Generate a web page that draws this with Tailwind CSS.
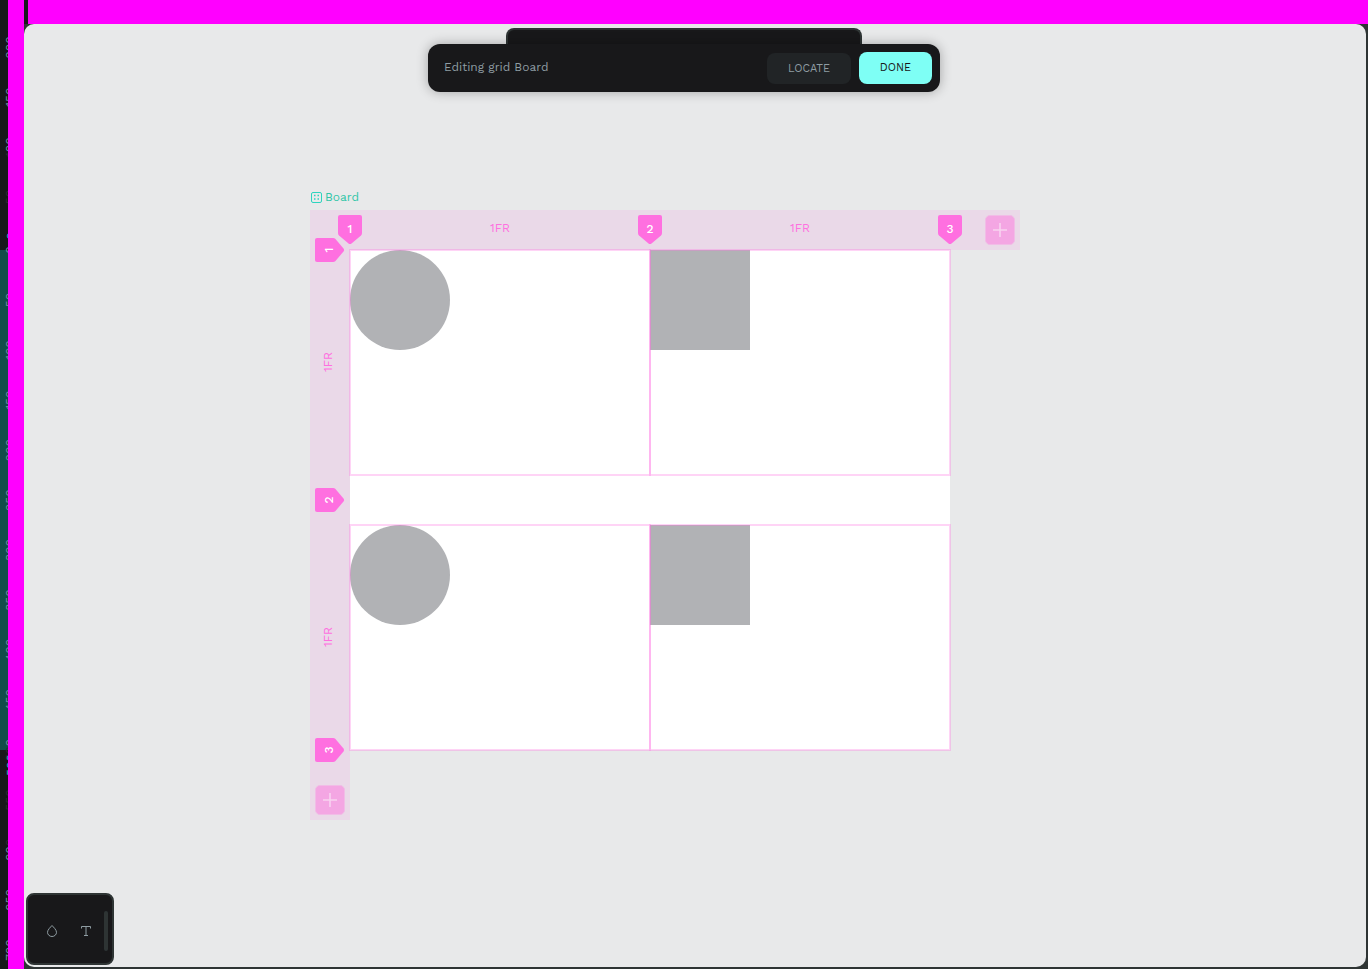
<!DOCTYPE html>
<html lang="en">
<head>
<meta charset="utf-8">
<meta name="viewport" content="width=device-width, initial-scale=1">
<title>Grid editor</title>
<script src="https://cdn.jsdelivr.net/npm/@tailwindcss/browser@4"></script>
</head>
<body class="h-screen overflow-hidden bg-[#18181a] font-['Work_Sans','Inter',sans-serif] text-xs">
<div class="flex h-full">
  <!-- vertical ruler -->
  <aside class="flex w-6 shrink-0" aria-label="Vertical ruler">
    <svg class="h-full w-2 shrink-0 overflow-hidden" aria-hidden="true">
      <rect x="0" y="250" width="8" height="500" fill="#124d49"/>
      <g fill="#7190a5" font-size="12" text-anchor="middle">
        <text transform="translate(14 50) rotate(-90)">-200</text>
        <text transform="translate(14 100) rotate(-90)">-150</text>
        <text transform="translate(14 150) rotate(-90)"><tspan fill="#2c3033">-1</tspan>00</text>
        <text transform="translate(14 200) rotate(-90)" fill="#2c3033">-50</text>
        <text transform="translate(14 250) rotate(-90)">0</text>
        <text transform="translate(14 300) rotate(-90)">50</text>
        <text transform="translate(14 350) rotate(-90)">100</text>
        <text transform="translate(14 400) rotate(-90)">150</text>
        <text transform="translate(14 450) rotate(-90)">200</text>
        <text transform="translate(14 500) rotate(-90)">250</text>
        <text transform="translate(14 550) rotate(-90)">300</text>
        <text transform="translate(14 600) rotate(-90)">350</text>
        <text transform="translate(14 650) rotate(-90)">400</text>
        <text transform="translate(14 700) rotate(-90)">450</text>
        <text transform="translate(14 750) rotate(-90)"><tspan fill="#2c3033">50</tspan>0</text>
        <text transform="translate(14 800) rotate(-90)" fill="#2c3033">550</text>
        <text transform="translate(14 850) rotate(-90)">60<tspan fill="#2c3033">0</tspan></text>
        <text transform="translate(14 900) rotate(-90)">650</text>
        <text transform="translate(14 950) rotate(-90)">700</text>
        <text transform="translate(15 236) rotate(-90)" fill="#31b5d6">0</text>
        <text transform="translate(15 765) rotate(-90)" fill="#31b5d6">500</text>
      </g>
    </svg>
    <div class="flex-1 bg-[#ff00ff]"></div>
  </aside>

  <div class="flex min-w-0 flex-1 flex-col">
    <div class="ml-1 h-6 shrink-0 bg-[#ff00ff]"></div>

    <div class="min-h-0 flex-1 bg-[#2e3434] pr-0.5 pb-0.5">
      <main class="relative h-full overflow-hidden rounded-[10px] bg-[#e8e9ea]">

        <!-- board on the canvas -->
        <section class="absolute top-[164px] left-[286px] w-[710px]" aria-label="Board">
          <h1 class="flex h-[22px] items-start gap-[3px] pl-px leading-4 text-[#31c6a8]">
            <svg class="mt-1 size-[11px]" viewBox="0 0 11 11" fill="none" stroke="#2dd4bf" aria-hidden="true">
              <rect x=".5" y=".5" width="10" height="10" rx="1.5"/>
              <path d="M3 3.500h1.500M6.500 3.500h1.500M3 7h1.500M6.500 7h1.500" stroke-width="1.500"/>
            </svg>
            <span class="pt-px">Board</span>
          </h1>
          <div class="relative grid grid-cols-[40px_600px_70px] grid-rows-[40px_500px_70px]">
            <div class="col-start-1 col-end-4 row-start-1 bg-[#ff6fe0]/12"></div>
            <div class="col-start-1 row-start-2 row-end-4 bg-[#ff6fe0]/12"></div>

            <!-- column sizes -->
            <div class="col-start-2 row-start-1 grid grid-cols-2 items-center pb-1 text-center text-[#ff6fe0]">
              <span>1FR</span><span>1FR</span>
            </div>
            <!-- row sizes -->
            <div class="col-start-1 row-start-2 grid grid-rows-2 gap-[50px] pr-1 text-[#ff6fe0]">
              <span class="flex rotate-180 items-center justify-center [writing-mode:vertical-rl]">1FR</span>
              <span class="flex rotate-180 items-center justify-center [writing-mode:vertical-rl]">1FR</span>
            </div>

            <!-- cells -->
            <div class="relative col-start-2 row-start-2 bg-white">
              <div class="grid h-full grid-cols-2 grid-rows-2 gap-y-[50px]">
                <div class="size-[100px] rounded-full bg-[#b1b2b5]"></div>
                <div class="size-[100px] bg-[#b1b2b5]"></div>
                <div class="size-[100px] rounded-full bg-[#b1b2b5]"></div>
                <div class="size-[100px] bg-[#b1b2b5]"></div>
              </div>
              <div class="absolute inset-0 grid grid-cols-2 grid-rows-2 gap-y-[50px]">
                <div class="-m-px border-2 border-[#ff6fe0]/30"></div>
                <div class="-m-px border-2 border-[#ff6fe0]/30"></div>
                <div class="-m-px border-2 border-[#ff6fe0]/30"></div>
                <div class="-m-px border-2 border-[#ff6fe0]/30"></div>
              </div>
            </div>

            <!-- add track buttons -->
            <button class="relative col-start-3 row-start-1 mr-[5px] flex size-[30px] items-center justify-center self-center justify-self-end rounded-[5px] border border-[#f1bce6] bg-[#f4a6e3]" aria-label="Add column">
              <svg class="size-3.5" viewBox="0 0 14 14" stroke="#f8d3f0" stroke-width="1.600" aria-hidden="true"><path d="M7 0v14M0 7h14"/></svg>
            </button>
            <button class="relative col-start-1 row-start-3 mb-[5px] flex size-[30px] items-center justify-center self-end justify-self-center rounded-[5px] border border-[#f1bce6] bg-[#f4a6e3]" aria-label="Add row">
              <svg class="size-3.5" viewBox="0 0 14 14" stroke="#f8d3f0" stroke-width="1.600" aria-hidden="true"><path d="M7 0v14M0 7h14"/></svg>
            </button>

            <!-- track markers -->
            <svg class="pointer-events-none absolute inset-0 size-full" viewBox="0 0 710 610" font-size="12" font-weight="500" text-anchor="middle" fill="white">
              <defs>
                <path id="tag" d="M-10-35h20q2 0 2 2v16q0 1.500-1 2.500L1.500-6.500q-1.500 1.200-3 0L-11-14.500q-1-1-1-2.500v-16q0-2 2-2z" fill="#ff6fe0"/>
              </defs>
              <g transform="translate(40 40)"><use href="#tag"/><text y="-17">1</text></g>
              <g transform="translate(340 40)"><use href="#tag"/><text y="-17">2</text></g>
              <g transform="translate(640 40)"><use href="#tag"/><text y="-17">3</text></g>
              <g transform="translate(40 40) rotate(-90)"><use href="#tag"/><text y="-17">1</text></g>
              <g transform="translate(40 290) rotate(-90)"><use href="#tag"/><text y="-17">2</text></g>
              <g transform="translate(40 540) rotate(-90)"><use href="#tag"/><text y="-17">3</text></g>
            </svg>
          </div>
        </section>

        <!-- editing bar -->
        <div class="absolute top-1 right-[22px] left-0 flex flex-col items-center">
          <div class="h-4 w-[356px] rounded-t-lg border-2 border-b-0 border-[#2e3434] bg-[#18181a]"></div>
          <div class="flex h-12 w-[512px] items-center gap-2 rounded-xl bg-[#18181a] px-2 shadow-[0_0_12px_rgba(0,0,0,0.3)]">
            <p class="flex-1 pb-0.5 pl-2 text-[#8f9da3]">Editing grid Board</p>
            <button class="mt-px h-[31px] w-[84px] rounded-lg bg-[#212426] pt-px text-[11px] text-[#8f9da3]">LOCATE</button>
            <button class="h-8 w-[73px] rounded-lg bg-[#7efff5] text-[11px] text-[#18181a]">DONE</button>
          </div>
        </div>

        <!-- palette -->
        <div class="absolute bottom-0.5 left-0.5 flex h-[72px] w-[88px] items-center rounded-lg border-2 border-[#2e3434] bg-[#18181a] pt-1 pr-1 pl-4">
          <button class="flex size-4 items-center justify-center" aria-label="Colours">
            <svg class="size-4" viewBox="0 0 16 16" fill="none" stroke="#8f9da3" aria-hidden="true"><path d="M8 2.500C6.500 4.200 3.500 6.800 3.500 9.300a4.500 4.200 0 0 0 9 0C12.500 6.800 9.500 4.200 8 2.500z"/></svg>
          </button>
          <button class="ml-[18px] flex size-4 items-center justify-center" aria-label="Typographies">
            <svg class="size-4" viewBox="0 0 16 16" fill="none" stroke="#8f9da3" aria-hidden="true"><path d="M3.500 5.500v-2h9v2M8 3.500v9M6 12.500h4"/></svg>
          </button>
          <div class="ml-auto h-10 w-1 rounded-full bg-[#2e3434]"></div>
        </div>
      </main>
    </div>
  </div>
</div>
</body>
</html>
